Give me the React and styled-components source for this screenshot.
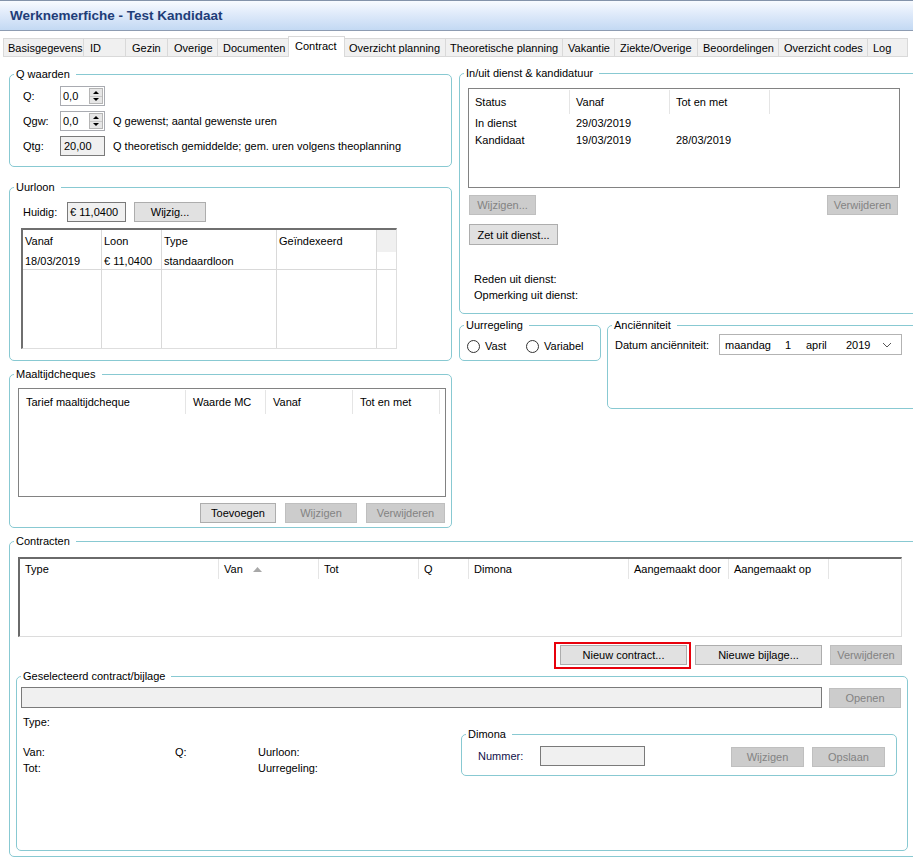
import React from "react";
import styled, { createGlobalStyle, css } from "styled-components";

const GlobalStyle = createGlobalStyle`
  html, body { margin: 0; padding: 0; background: #fff; }
  body {
    font-family: "Liberation Sans", Arial, sans-serif;
    font-size: 11px;
    color: #000;
  }
  * { box-sizing: border-box; }
`;

const Window = styled.div`
  width: 913px;
  height: 863px;
  overflow: hidden;
  background: #fff;
`;

const TitleBar = styled.div`
  height: 31px;
  border-top: 1px solid #8393aa;
  border-bottom: 1px solid #8d9cb2;
  background: linear-gradient(#f8fbff 0%, #dfeafa 45%, #c3d9f3 100%);
  display: flex;
  align-items: center;
  padding-left: 10px;
  font-weight: bold;
  font-size: 13.5px;
  color: #1f3d78;
`;

const TabStrip = styled.div`
  margin-top: 5px;
  height: 21px;
  padding-left: 3px;
  display: flex;
  align-items: flex-end;
`;

const Tab = styled.div`
  width: ${(p) => p.$w}px;
  height: ${(p) => (p.$active ? 21 : 19)}px;
  padding-left: ${(p) => p.$pad}px;
  display: flex;
  align-items: center;
  white-space: nowrap;
  overflow: hidden;
  border: 1px solid #d9d9d9;
  border-right: none;
  background: #f0f0f0;
  ${(p) =>
    p.$active &&
    css`
      background: #fff;
      border-right: 1px solid #d9d9d9;
      border-bottom: none;
      padding-bottom: 2px;
      & + div { border-left: none; }
    `}
  &:last-child { border-right: 1px solid #d9d9d9; }
`;

const Content = styled.div`
  display: grid;
  grid-template-columns: 443px 470px;
  column-gap: 7px;
  padding: 10px 0 0 9px;
`;

const Lower = styled.div`
  padding: 7px 0 0 9px;
`;

const Column = styled.div`
  display: flex;
  flex-direction: column;
  align-items: flex-start;
  margin-top: ${(p) => p.$top || 0}px;
`;

const Group = styled.fieldset`
  margin: ${(p) => p.$mt || 0}px 0 0 ${(p) => p.$ml || 0}px;
  padding: 0;
  min-width: 0;
  width: ${(p) => (p.$w ? `${p.$w}px` : "auto")};
  height: ${(p) => p.$h}px;
  border: 1px solid #88c9d2;
  border-radius: 5px;
  flex: none;
  align-self: ${(p) => (p.$w ? "auto" : "stretch")};
  ${(p) => p.$grow && css`flex: 1 1 auto;`}
`;

const Legend = styled.legend`
  margin-left: 4px;
  padding: 0 6px 0 2px;
  line-height: 13px;
  font-size: 11px;
`;

const Body = styled.div`
  padding: ${(p) => p.$pad};
  display: flex;
  flex-direction: column;
`;

const Row = styled.div`
  display: flex;
  align-items: ${(p) => p.$align || "center"};
  height: ${(p) => p.$h || 20}px;
  width: ${(p) => (p.$w ? `${p.$w}px` : "auto")};
  margin-top: ${(p) => p.$mt || 0}px;
  margin-left: ${(p) => p.$ml || 0}px;
  padding: ${(p) => p.$pad || 0};
  gap: ${(p) => p.$gap || 0}px;
  justify-content: ${(p) => p.$justify || "flex-start"};
  align-self: ${(p) => (p.$w ? "flex-start" : "stretch")};
`;

const Label = styled.span`
  width: ${(p) => (p.$w ? `${p.$w}px` : "auto")};
  flex: none;
  margin-left: ${(p) => p.$ml || 0}px;
  white-space: nowrap;
  color: ${(p) => p.$color || "#000"};
`;

const TextLine = styled.div`
  height: 16px;
  line-height: 16px;
  margin-top: ${(p) => p.$mt || 0}px;
  margin-left: ${(p) => p.$ml || 0}px;
  white-space: nowrap;
`;

const Note = styled.span`
  margin-left: 8px;
  white-space: nowrap;
`;

const SpinBox = styled.div`
  width: 45px;
  height: 20px;
  border: 1px solid #a9abb1;
  display: flex;
  align-items: center;
  background: #fff;
`;

const SpinValue = styled.span`
  flex: 1;
  padding-left: 2px;
`;

const SpinButtons = styled.div`
  width: 14px;
  height: 16px;
  margin-right: 1px;
  border: 1px solid #b5b5b5;
  background: #e6e6e6;
  display: flex;
  flex-direction: column;
`;

const SpinHalf = styled.div`
  flex: 1;
  display: flex;
  align-items: center;
  justify-content: center;
  ${(p) => !p.$down && css`border-bottom: 1px solid #c8c8c8;`}
  &::before {
    content: "";
    border-left: 3px solid transparent;
    border-right: 3px solid transparent;
    ${(p) =>
      p.$down
        ? css`border-top: 3px solid #000;`
        : css`border-bottom: 3px solid #000;`}
  }
`;

const ReadBox = styled.div`
  width: ${(p) => p.$w}px;
  height: ${(p) => p.$h || 20}px;
  border: 1px solid ${(p) => p.$border || "#7a7a7a"};
  background: #f0f0f0;
  padding-left: ${(p) => p.$pad ?? 3}px;
  display: flex;
  align-items: center;
  flex: none;
  white-space: nowrap;
`;

const Button = styled.button`
  width: ${(p) => p.$w}px;
  height: ${(p) => p.$h || 20}px;
  margin-left: ${(p) => p.$ml || 0}px;
  margin-top: ${(p) => p.$mt || 0}px;
  padding: 0;
  font: inherit;
  font-size: 11px;
  flex: none;
  background: #e1e1e1;
  border: 1px solid #adadad;
  color: #000;
  position: relative;
  &:disabled {
    background: #cccccc;
    border-color: #bfbfbf;
    color: #838383;
  }
  ${(p) =>
    p.$highlight &&
    css`
      &::after {
        content: "";
        position: absolute;
        left: -7px;
        top: -4px;
        right: -5px;
        bottom: -5px;
        border: 2px solid #e8000b;
        pointer-events: none;
      }
    `}
`;

/* Uurloon grid */
const LoonGrid = styled.div`
  margin-top: 6px;
  width: 376px;
  height: 121px;
  border-top: 2px solid #6f6f6f;
  border-left: 2px solid #6f6f6f;
  border-right: 1px solid #dedede;
  border-bottom: 1px solid #dedede;
  display: grid;
  grid-template-columns: 79px 60px 115px 100px 1fr;
  grid-template-rows: 22px 18px 1fr;
`;

const LoonCell = styled.div`
  border-right: ${(p) => (p.$last ? "none" : "1px solid #d9d9d9")};
  border-bottom: ${(p) => (p.$row === 1 ? "1px solid #d9d9d9" : "none")};
  background: ${(p) => (p.$filler ? "#f0f0f0" : "#fff")};
  padding-left: 2px;
  display: flex;
  align-items: center;
  white-space: nowrap;
  overflow: hidden;
`;

/* List views */
const ListBox = styled.div`
  width: ${(p) => p.$w}px;
  height: ${(p) => p.$h}px;
  margin-left: ${(p) => p.$ml || 0}px;
  flex: none;
  background: #fff;
  ${(p) =>
    p.$sunken
      ? css`
          border-top: 2px solid #6a6a6a;
          border-left: 2px solid #6a6a6a;
          border-right: 1px solid #dcdcdc;
          border-bottom: 1px solid #dcdcdc;
        `
      : css`border: 1px solid #828282;`}
`;

const HeaderRow = styled.div`
  display: flex;
  height: ${(p) => p.$h}px;
  padding-top: ${(p) => p.$pt || 0}px;
`;

const HeaderCell = styled.div`
  width: ${(p) => p.$w}px;
  flex: none;
  border-right: 1px solid #e5e5e5;
  padding-left: ${(p) => p.$pad || 6}px;
  display: flex;
  align-items: center;
  white-space: nowrap;
  gap: 10px;
`;

const DataRow = styled.div`
  display: flex;
  height: 17px;
  align-items: center;
`;

const DataCell = styled.div`
  width: ${(p) => p.$w}px;
  flex: none;
  padding-left: 6px;
  white-space: nowrap;
`;

/* Radios */
const RadioItem = styled.label`
  display: flex;
  align-items: center;
  width: ${(p) => p.$w}px;
  flex: none;
  gap: 5px;
`;

const RadioCircle = styled.span`
  width: 13px;
  height: 13px;
  border-radius: 50%;
  border: 1px solid #333;
  background: #fff;
  flex: none;
`;

/* Date picker */
const DateBox = styled.div`
  width: 183px;
  height: 21px;
  border: 1px solid #b3b3b3;
  display: flex;
  align-items: center;
  padding-left: 5px;
  flex: none;
`;

const DatePart = styled.span`
  width: ${(p) => p.$w}px;
  flex: none;
  white-space: nowrap;
`;

const Chevron = styled.svg`
  display: block;
  margin-left: 1px;
`;

const InfoGrid = styled.div`
  display: grid;
  grid-template-columns: 152px 83px 120px;
  grid-auto-rows: 16px;
  align-items: center;
  margin-left: 2px;
  padding-top: 14px;
  flex: none;
`;

const SplitRow = styled.div`
  display: flex;
  align-items: flex-start;
`;

const tabs = [
  ["Basisgegevens", 80, 4],
  ["ID", 42, 6],
  ["Gezin", 42, 6],
  ["Overige", 50, 6],
  ["Documenten", 71, 5],
  ["Contract", 57, 6, true],
  ["Overzicht planning", 100, 4],
  ["Theoretische planning", 117, 4],
  ["Vakantie", 52, 5],
  ["Ziekte/Overige", 83, 5],
  ["Beoordelingen", 81, 5],
  ["Overzicht codes", 89, 5],
  ["Log", 41, 5],
];

const loonCols = [
  ["Vanaf", "18/03/2019"],
  ["Loon", "€ 11,0400"],
  ["Type", "standaardloon"],
  ["Geïndexeerd", ""],
];

const mcCols = [
  ["Tarief maaltijdcheque", 167],
  ["Waarde MC", 80],
  ["Vanaf", 87],
  ["Tot en met", 87],
];

const statusCols = [
  ["Status", 101],
  ["Vanaf", 100],
  ["Tot en met", 100],
];

const statusRows = [
  ["In dienst", "29/03/2019", ""],
  ["Kandidaat", "19/03/2019", "28/03/2019"],
];

const contractCols = [
  ["Type", 199],
  ["Van", 100, true],
  ["Tot", 100],
  ["Q", 50],
  ["Dimona", 160],
  ["Aangemaakt door", 100],
  ["Aangemaakt op", 100],
];

function Spin({ value }) {
  return (
    <SpinBox>
      <SpinValue>{value}</SpinValue>
      <SpinButtons>
        <SpinHalf />
        <SpinHalf $down />
      </SpinButtons>
    </SpinBox>
  );
}

function SortUp() {
  return (
    <svg width="9" height="5" viewBox="0 0 9 5">
      <polygon points="0,5 4.5,0 9,5" fill="#a8a8a8" />
    </svg>
  );
}

export default function App() {
  return (
    <Window>
      <GlobalStyle />
      <TitleBar>Werknemerfiche - Test Kandidaat</TitleBar>
      <TabStrip>
        {tabs.map(([t, w, pad, active]) => (
          <Tab key={t} $w={w} $pad={pad} $active={active}>
            {t}
          </Tab>
        ))}
      </TabStrip>

      <Content>
        <Column $top={1}>
          <Group $h={99}>
            <Legend>Q waarden</Legend>
            <Body $pad="5px 0 0 13px">
              <Row>
                <Label $w={37}>Q:</Label>
                <Spin value="0,0" />
              </Row>
              <Row $mt={5}>
                <Label $w={37}>Qgw:</Label>
                <Spin value="0,0" />
                <Note>Q gewenst; aantal gewenste uren</Note>
              </Row>
              <Row $mt={5}>
                <Label $w={37}>Qtg:</Label>
                <ReadBox $w={45}>20,00</ReadBox>
                <Note>Q theoretisch gemiddelde; gem. uren volgens theoplanning</Note>
              </Row>
            </Body>
          </Group>

          <Group $h={180} $mt={14}>
            <Legend>Uurloon</Legend>
            <Body $pad="7px 0 0 11px">
              <Row $h={21}>
                <Label $w={44} $ml={2}>Huidig:</Label>
                <ReadBox $w={59} $pad={2}>€ 11,0400</ReadBox>
                <Button $w={72} $ml={8}>Wijzig...</Button>
              </Row>
              <LoonGrid>
                {loonCols.map(([h]) => (
                  <LoonCell key={h}>{h}</LoonCell>
                ))}
                <LoonCell $filler $last />
                {loonCols.map(([h, v]) => (
                  <LoonCell key={h + "v"} $row={1}>{v}</LoonCell>
                ))}
                <LoonCell $row={1} $last />
                {loonCols.map(([h]) => (
                  <LoonCell key={h + "e"} />
                ))}
                <LoonCell $last />
              </LoonGrid>
            </Body>
          </Group>

          <Group $h={160} $mt={7}>
            <Legend>Maaltijdcheques</Legend>
            <Body $pad="7px 0 0 8px">
              <ListBox $w={428} $h={109}>
                <HeaderRow $h={25} $pt={1}>
                  {mcCols.map(([h, w]) => (
                    <HeaderCell key={h} $w={w} $pad={7}>{h}</HeaderCell>
                  ))}
                </HeaderRow>
              </ListBox>
              <Row $mt={6} $gap={9} $justify="flex-end" $pad="0 6px 0 0">
                <Button $w={76}>Toevoegen</Button>
                <Button $w={72} disabled>Wijzigen</Button>
                <Button $w={79} disabled>Verwijderen</Button>
              </Row>
            </Body>
          </Group>
        </Column>

        <Column>
          <Group $h={247}>
            <Legend>In/uit dienst &amp; kandidatuur</Legend>
            <Body $pad="8px 0 0 8px">
              <ListBox $w={432} $h={100}>
                <HeaderRow $h={25} $pt={1}>
                  {statusCols.map(([h, w]) => (
                    <HeaderCell key={h} $w={w}>{h}</HeaderCell>
                  ))}
                </HeaderRow>
                {statusRows.map((r) => (
                  <DataRow key={r[0]}>
                    {r.map((c, i) => (
                      <DataCell key={i} $w={statusCols[i][1]}>{c}</DataCell>
                    ))}
                  </DataRow>
                ))}
              </ListBox>
              <Row $mt={7} $w={432} $justify="space-between" $pad="0 2px 0 1px">
                <Button $w={67} disabled>Wijzigen...</Button>
                <Button $w={71} disabled>Verwijderen</Button>
              </Row>
              <Row $mt={9} $h={21} $ml={1}>
                <Button $w={89} $h={21}>Zet uit dienst...</Button>
              </Row>
              <TextLine $mt={26} $ml={6}>Reden uit dienst:</TextLine>
              <TextLine $ml={6}>Opmerking uit dienst:</TextLine>
            </Body>
          </Group>

          <Row $mt={5} $h={90} $align="flex-start">
            <Group $w={142} $h={42}>
              <Legend>Uurregeling</Legend>
              <Body $pad="7px 0 0 7px">
                <Row $h={14}>
                  <RadioItem $w={59}>
                    <RadioCircle />
                    Vast
                  </RadioItem>
                  <RadioItem $w={70}>
                    <RadioCircle />
                    Variabel
                  </RadioItem>
                </Row>
              </Body>
            </Group>
            <Group $h={90} $ml={6} $grow>
              <Legend>Anciënniteit</Legend>
              <Body $pad="2px 0 0 7px">
                <Row $h={21}>
                  <Label $w={104}>Datum anciënniteit:</Label>
                  <DateBox>
                    <DatePart $w={60}>maandag</DatePart>
                    <DatePart $w={21}>1</DatePart>
                    <DatePart $w={40}>april</DatePart>
                    <DatePart $w={35}>2019</DatePart>
                    <Chevron width="10" height="6" viewBox="0 0 10 6">
                      <polyline points="1,1 5,5 9,1" fill="none" stroke="#555" strokeWidth="1" />
                    </Chevron>
                  </DateBox>
                </Row>
              </Body>
            </Group>
          </Row>
        </Column>
      </Content>

      <Lower>
        <Group $h={322} $w={920}>
          <Legend>Contracten</Legend>
          <Body $pad="9px 0 0 6px">
            <ListBox $w={884} $h={80} $sunken $ml={2}>
              <HeaderRow $h={20}>
                {contractCols.map(([h, w, sort]) => (
                  <HeaderCell key={h} $w={w} $pad={5}>
                    {h}
                    {sort && <SortUp />}
                  </HeaderCell>
                ))}
              </HeaderRow>
            </ListBox>
            <Row $mt={8} $gap={8} $w={886} $justify="flex-end">
              <Button $w={127} $highlight>Nieuw contract...</Button>
              <Button $w={127}>Nieuwe bijlage...</Button>
              <Button $w={72} disabled>Verwijderen</Button>
            </Row>
            <Group $w={892} $h={181} $mt={5}>
              <Legend>Geselecteerd contract/bijlage</Legend>
              <Body $pad="4px 0 0 4px">
                <Row $h={21}>
                  <ReadBox $w={801} $h={21} />
                  <Button $w={72} $ml={7} disabled>Openen</Button>
                </Row>
                <TextLine $mt={6} $ml={2}>Type:</TextLine>
                <SplitRow>
                  <InfoGrid>
                    <span>Van:</span>
                    <span>Q:</span>
                    <span>Uurloon:</span>
                    <span>Tot:</span>
                    <span />
                    <span>Uurregeling:</span>
                  </InfoGrid>
                  <Group $w={436} $h={48} $ml={83} $mt={-2}>
                    <Legend>Dimona</Legend>
                    <Body $pad="5px 11px 0 16px">
                      <Row>
                        <Label $w={62} $color="#10104a">Nummer:</Label>
                        <ReadBox $w={105} />
                        <Button $w={73} $ml={86} $mt={1} disabled>Wijzigen</Button>
                        <Button $w={73} $ml={8} $mt={1} disabled>Opslaan</Button>
                      </Row>
                    </Body>
                  </Group>
                </SplitRow>
              </Body>
            </Group>
          </Body>
        </Group>
      </Lower>
    </Window>
  );
}
